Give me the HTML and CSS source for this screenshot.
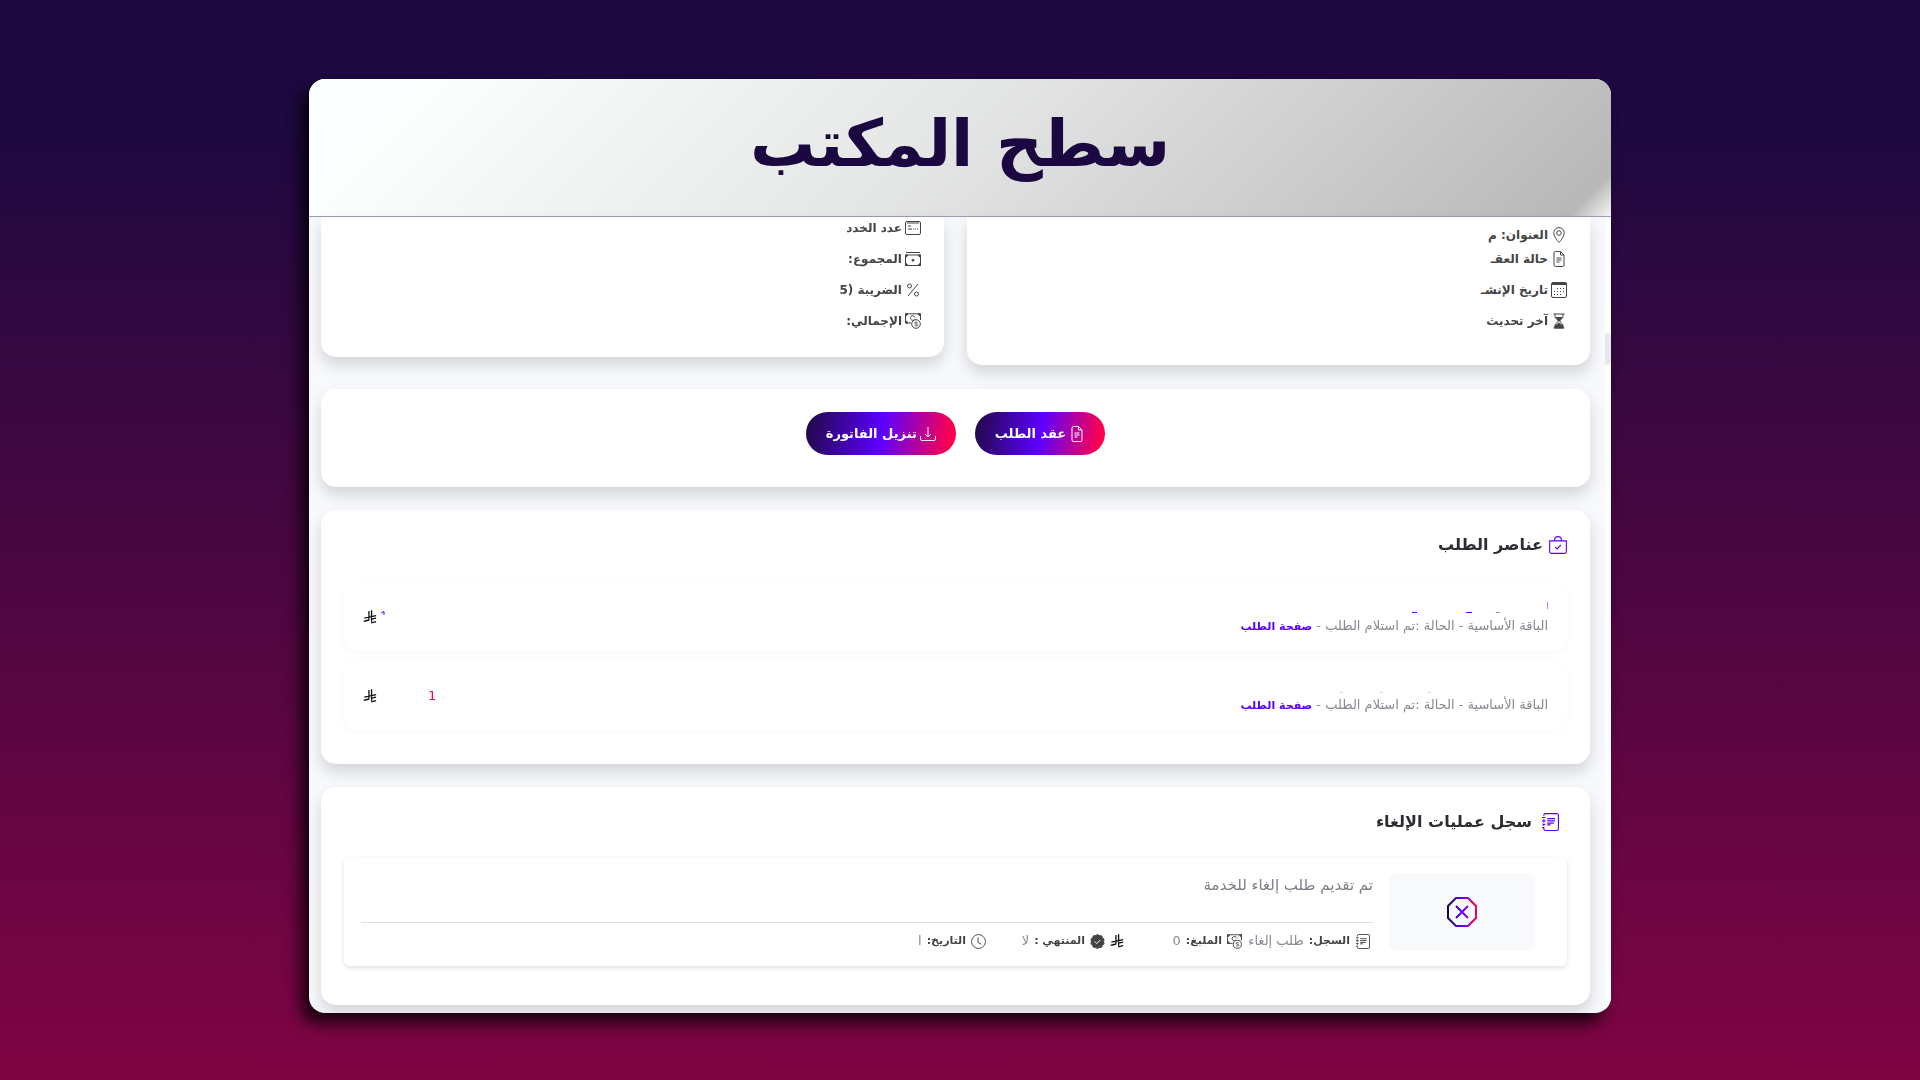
FILE: index.html
```
<!DOCTYPE html>
<html lang="ar" dir="rtl">
<head>
  <meta charset="UTF-8" />
  <meta name="viewport" content="width=device-width, initial-scale=1.0"/>
  <title>سطح المكتب</title>
  <link rel="stylesheet" href="styles.css">
</head>
<body>
  <!-- shared icons -->
  <svg class="sprite" aria-hidden="true">
    <defs>
      <linearGradient id="brand" x1="0" x2="1" y1="0" y2="0">
        <stop offset="0" stop-color="#1f0942"/>
        <stop offset="0.5" stop-color="#5b00ff"/>
        <stop offset="1" stop-color="#ff004c"/>
      </linearGradient>
    </defs>
    <symbol id="i-card" viewBox="0 0 16 16">
      <rect x="0.5" y="1.5" width="15" height="13" rx="1.5"/>
      <path d="M2 3h12M3 6h3M3 9h4M8 9h1M10 9h1M12 9h1"/>
    </symbol>
    <symbol id="i-cash" viewBox="0 0 16 16">
      <path d="M1 1.500h14"/>
      <rect x="0.500" y="4" width="15" height="10.500"/>
      <circle cx="8" cy="9.200" r="1" class="solid"/>
      <path class="solid" d="M0.500 4h2a2 2 0 0 1-2 2zM15.500 4h-2a2 2 0 0 0 2 2zM0.500 14.500h2a2 2 0 0 0-2-2zM15.500 14.500h-2a2 2 0 0 1 2-2z"/>
    </symbol>
    <symbol id="i-percent" viewBox="0 0 16 16">
      <circle cx="4.500" cy="4" r="2"/>
      <circle cx="11.500" cy="12" r="2"/>
      <path d="M13 2L3 14"/>
    </symbol>
    <symbol id="i-coin" viewBox="0 0 16 16">
      <path d="M6 10H.5V.8h15V7"/>
      <path class="solid" d="M.5.8h2a2 2 0 0 1-2 2zM15.500.8h-2a2 2 0 0 0 2 2zM.5 10h2a2 2 0 0 0-2-2z"/>
      <path d="M9.500 6.500A2.300 2.300 0 1 1 10 4.500"/>
      <circle cx="11" cy="11" r="4.300"/>
      <path d="M12.500 9.800c-.5-1-2.700-.9-2.700.2s2.800.8 2.800 2-2.500 1.200-3 .1"/>
    </symbol>
    <symbol id="i-pin" viewBox="0 0 16 16">
      <path d="M8 15.500S2.800 10 2.800 5.800a5.200 5.200 0 0 1 10.400 0C13.200 10 8 15.500 8 15.500z"/>
      <circle cx="8" cy="6" r="2.300"/>
    </symbol>
    <symbol id="i-doc" viewBox="0 0 16 16">
      <path d="M9.500.5h-5a1.500 1.500 0 0 0-1.500 1.500v12a1.500 1.500 0 0 0 1.500 1.500h7a1.500 1.500 0 0 0 1.500-1.500V4zM9.500.5V4H13M5.500 7h5M5.500 9h5M5.500 11h3"/>
    </symbol>
    <symbol id="i-calendar" viewBox="0 0 16 16">
      <rect x="0.500" y="0.500" width="15" height="15" rx="1.500"/>
      <path d="M1 2.500h14M6 6.500h1M9 6.500h1M12 6.500h1M3 9.500h1M6 9.500h1M9 9.500h1M12 9.500h1M3 12.500h1M6 12.500h1M9 12.500h1"/>
      <path d="M1 1.500h14"/>
    </symbol>
    <symbol id="i-hourglass" viewBox="0 0 16 16">
      <path d="M2.500 1h11M2.500 15h11M4 1v2.500C4 6 7.300 6.500 7.300 8S4 10 4 12.500V15M12 1v2.500C12 6 8.700 6.500 8.700 8s3.300 2 3.300 4.500V15"/>
      <path class="solid" d="M5 4.500h6L8 8zM4 15v-2l4-3 4 3v2z"/>
    </symbol>
    <symbol id="i-download" viewBox="0 0 16 16">
      <path d="M.5 10v3a1.500 1.500 0 0 0 1.500 1.500h12a1.500 1.500 0 0 0 1.500-1.500v-3M8 1v9M5 8l3 3 3-3"/>
    </symbol>
    <symbol id="i-bag" viewBox="0 0 16 16">
      <path d="M5 4V3.500a3 3 0 0 1 6 0V4M.6 4.300h14.800v9.700a1.400 1.400 0 0 1-1.400 1.400H2A1.400 1.400 0 0 1 .6 14zM5.500 9.800l1.700 1.700L10.500 8"/>
    </symbol>
    <symbol id="i-journal" viewBox="0 0 16 16">
      <path d="M2.500 2.500V2A1.500 1.500 0 0 1 4 .5h10A1.500 1.500 0 0 1 15.500 2v12a1.500 1.500 0 0 1-1.500 1.500H4A1.500 1.500 0 0 1 2.500 14v-.5M2.500 5v1M2.500 7.500v1M2.500 10.500v1M1 4h3M1 7h3M1 10h3M1 13h2"/>
      <path d="M5.500 5h7M5.500 7h7M5.500 9h6M5.500 10.500h3"/>
    </symbol>
    <symbol id="i-check" viewBox="0 0 16 16">
      <path class="solid" d="M8 .6l2 1 2.400.3.900 2.200 1.700 1.600-.5 2.300.5 2.400-1.700 1.600-.9 2.200-2.400.3-2 1-2-1-2.400-.3-.9-2.200L1 10.400 1.500 8 1 5.700l1.700-1.600.9-2.200L6 1.600z"/>
      <path class="tick" d="M5 8l2.200 2.200L11 6.200"/>
    </symbol>
    <symbol id="i-clock" viewBox="0 0 16 16">
      <circle cx="8" cy="8" r="7.400"/>
      <path d="M7.500 3.500V9l3.500 2"/>
    </symbol>
    <symbol id="i-riyal" viewBox="0 0 16 16">
      <path d="M6.800 1v9.500c0 1-.6 1.500-1.800 1.700L.8 13M9.800.3v13.200M1.500 9.400L15 6.500M1.500 12.600l4-.9M9.800 10.500L15 9.400M9.300 14.600L15 13.400"/>
    </symbol>
  </svg>

  <main class="window">
    <header class="titlebar">
      <h1>سطح المكتب</h1>
    </header>

    <div class="viewport">
      <div class="scroll-track"><div class="thumb-bar"></div></div>
      <div class="content">
        <div class="summary">
          <ul class="card details order">
            <li><svg class="icon"><use href="#i-pin"/></svg><span>العنوان: م</span></li>
            <li><svg class="icon"><use href="#i-doc"/></svg><span>حالة العقـ</span></li>
            <li><svg class="icon"><use href="#i-calendar"/></svg><span>تاريخ الإنشـ</span></li>
            <li><svg class="icon"><use href="#i-hourglass"/></svg><span>آخر تحديث</span></li>
          </ul>
          <ul class="card details">
            <li><svg class="icon"><use href="#i-card"/></svg><span>عدد الخدد</span></li>
            <li><svg class="icon"><use href="#i-cash"/></svg><span>المجموع:</span></li>
            <li><svg class="icon"><use href="#i-percent"/></svg><span>الضريبة (5</span></li>
            <li><svg class="icon"><use href="#i-coin"/></svg><span>الإجمالي:</span></li>
          </ul>
        </div>

        <div class="card actions">
          <button type="button"><svg class="icon"><use href="#i-doc"/></svg>عقد الطلب</button>
          <button type="button"><svg class="icon"><use href="#i-download"/></svg>تنزيل الفاتورة</button>
        </div>

        <section class="card items">
          <h2><svg class="icon"><use href="#i-bag"/></svg>عناصر الطلب</h2>
          <div class="item">
            <div class="info">
              <svg class="traces" viewBox="0 0 220 16" aria-hidden="true">
                <path class="faint" d="M219.500 2v7M168 12.500h4"/>
                <path d="M84 12.500h5M138 12.500h6"/>
              </svg>
              <p>الباقة الأساسية - الحالة :تم استلام الطلب - <a href="#">صفحة الطلب</a></p>
            </div>
            <div class="price">
              <svg class="digit" viewBox="0 0 6 14" aria-hidden="true"><path d="M1 3L4 1.500V5"/></svg>
              <svg class="riyal"><use href="#i-riyal"/></svg>
            </div>
          </div>
          <div class="item">
            <div class="info">
              <svg class="traces pale" viewBox="0 0 220 16" aria-hidden="true">
                <path d="M12 13.500h3M52 13.500h3M100 13.500h3"/>
              </svg>
              <p>الباقة الأساسية - الحالة :تم استلام الطلب - <a href="#">صفحة الطلب</a></p>
            </div>
            <div class="price due">
              <span>1</span>
              <svg class="riyal"><use href="#i-riyal"/></svg>
            </div>
          </div>
        </section>

        <section class="card log">
          <h2><svg class="icon"><use href="#i-journal"/></svg>سجل عمليات الإلغاء</h2>
          <div class="entry">
            <div class="thumb">
              <svg viewBox="0 0 30 30" aria-hidden="true">
                <path d="M9 1h12l8 8v12l-8 8H9l-8-8V9zM9 9l12 12M21 9L9 21"/>
              </svg>
            </div>
            <div class="entry-body">
              <p>تم تقديم طلب إلغاء للخدمة</p>
              <div class="meta">
                <span class="m-type"><svg class="icon"><use href="#i-journal"/></svg><b>السجل:</b> طلب إلغاء</span>
                <span class="m-amount"><svg class="icon"><use href="#i-coin"/></svg><b>الملبغ:</b> 0</span>
                <svg class="riyal"><use href="#i-riyal"/></svg>
                <span class="m-done"><svg class="icon"><use href="#i-check"/></svg><b>المنتهي :</b> لا</span>
                <span class="m-date"><svg class="icon"><use href="#i-clock"/></svg><b>التاريخ:</b> ا</span>
              </div>
            </div>
          </div>
        </section>
      </div>
    </div>
  </main>
</body>
</html>
```
FILE: styles.css
```
* {
  box-sizing: border-box;
}

body {
  margin: 0;
  min-height: 100vh;
  padding: 79px 309px 67px;
  display: flex;
  font-family: "DejaVu Sans", sans-serif;
  font-size: 13px;
  color: #444;
  background: linear-gradient(#1e0940 12%, #800443);
}

h1, h2, p, ul {
  margin: 0;
  padding: 0;
}

.sprite {
  position: absolute;
  width: 0;
  height: 0;
}

.icon, .riyal, .thumb svg, .traces, .digit {
  fill: none;
  stroke: currentColor;
  stroke-width: 1;
  flex: none;
}

.icon {
  width: 16px;
  height: 16px;
}

.riyal {
  width: 14px;
  height: 14px;
  color: #111;
  stroke-width: 1.5;
}

.solid {
  fill: currentColor;
}

.tick {
  stroke: white;
}

.window {
  flex: 1;
  display: flex;
  flex-direction: column;
  overflow: hidden;
  border-radius: 16px;
  background: #f8f9fc;
  filter: drop-shadow(-8px 10px 8px rgba(0, 0, 0, 0.8));
}

.titlebar {
  height: 138px;
  padding-bottom: 8px;
  display: flex;
  align-items: center;
  justify-content: center;
  border-bottom: 1px solid #9d99bd;
  background: linear-gradient(135deg, #fbffff 8%, #e3e5e4 50%, #b8b8b8 97%, #f4f4f4);
}

h1 {
  font-size: 65px;
  line-height: 80px;
  color: #1c0840;
}

.viewport {
  flex: 1;
  display: flex;
}

.content {
  flex: 1;
  padding: 0 15px 7px 12px;
  display: flex;
  flex-direction: column;
  gap: 23px;
}

.scroll-track {
  width: 6px;
  background: white;
}

.thumb-bar {
  height: 32px;
  margin-top: 116px;
  border-radius: 0 4px 4px 0;
  background: #e9e9eb;
}

.card {
  border-radius: 15px;
  background: white;
  box-shadow: 0 8px 16px rgba(0, 0, 0, 0.15);
}

.summary {
  display: grid;
  grid-template-columns: 1fr 1fr;
  align-items: start;
  gap: 23px;
  padding-bottom: 1px;
}

.details {
  list-style: none;
  padding: 1px 23px 26px;
  border-radius: 0 0 15px 15px;
}

.details li {
  display: flex;
  align-items: center;
  gap: 3px;
  height: 20px;
  margin-bottom: 11px;
}

.details li:last-child {
  margin-bottom: 0;
}

.details span {
  white-space: nowrap;
  font-size: 12px;
  font-weight: bold;
  line-height: 20px;
}

.order {
  padding-top: 8px;
  padding-bottom: 34px;
}

.order li:first-child {
  margin-bottom: 4px;
}

.actions {
  display: flex;
  justify-content: center;
  gap: 19px;
  padding: 23px 23px 32px;
}

button {
  display: flex;
  align-items: center;
  gap: 3px;
  height: 43px;
  padding: 0 20px;
  border: 0;
  border-radius: 22px;
  font: bold 13px "DejaVu Sans", sans-serif;
  color: white;
  background: linear-gradient(100deg, #1f0942, #5b00ff 50%, #ff004c 95%);
  cursor: pointer;
}

h2 {
  display: flex;
  align-items: center;
  gap: 6px;
  font-size: 16px;
  line-height: 24px;
  color: #2b2d33;
}

h2 .icon {
  width: 18px;
  height: 18px;
  color: #5b00ff;
}

.items {
  padding: 23px 23px 34px;
}

.items h2 {
  margin-bottom: 23px;
}

.item {
  display: flex;
  justify-content: space-between;
  height: 71px;
  padding: 20px 19px 0;
  border-radius: 15px;
  box-shadow: 0 2px 8px rgba(0, 0, 0, 0.03);
}

.item + .item {
  margin-top: 8px;
}

.info {
  display: flex;
  flex-direction: column;
  align-items: flex-start;
  color: #868a90;
}

.info p {
  line-height: 20px;
}

.traces {
  width: 220px;
  height: 16px;
  color: #5b00ff;
}

.traces .faint {
  opacity: 0.5;
}

.pale {
  opacity: 0.2;
}

a {
  color: #5b00ff;
  font-size: 11px;
  font-weight: bold;
  text-decoration: none;
}

.price {
  display: flex;
  align-items: center;
  gap: 3px;
  height: 34px;
  line-height: 20px;
}

.digit {
  width: 6px;
  height: 14px;
  color: #5b00ff;
}

.due {
  gap: 51px;
  color: #f0045f;
}

.log {
  padding: 23px 23px 39px;
}

.log h2 {
  gap: 9px;
  padding-right: 8px;
  margin-bottom: 23px;
}

.entry {
  display: flex;
  gap: 16px;
  padding: 16px 32px 15px 17px;
  border-radius: 6px;
  box-shadow: 0 2px 5px rgba(0, 0, 0, 0.12);
}

.thumb {
  width: 146px;
  height: 78px;
  display: flex;
  align-items: center;
  justify-content: center;
  border-radius: 8px;
  background: #f8f9fb;
}

.thumb svg {
  width: 30px;
  height: 30px;
  stroke: url(#brand);
  stroke-width: 2;
}

.entry-body {
  flex: 1;
}

.entry-body p {
  font-size: 15px;
  line-height: 24px;
  padding-bottom: 25px;
  border-bottom: 1px solid #dddde8;
  color: #7a7f87;
}

.meta {
  display: flex;
  align-items: center;
  padding: 8px 3px 0;
  line-height: 20px;
  color: #868a90;
}

.meta span {
  display: flex;
  align-items: center;
  gap: 5px;
}

.meta b {
  font-size: 11px;
}

.meta b, .meta .icon {
  color: #444;
}

.meta .icon {
  width: 15px;
  height: 15px;
}

.m-type {
  min-width: 128px;
}

.m-amount {
  min-width: 118px;
}

.m-done {
  min-width: 119px;
  margin-right: 5px;
}
```
